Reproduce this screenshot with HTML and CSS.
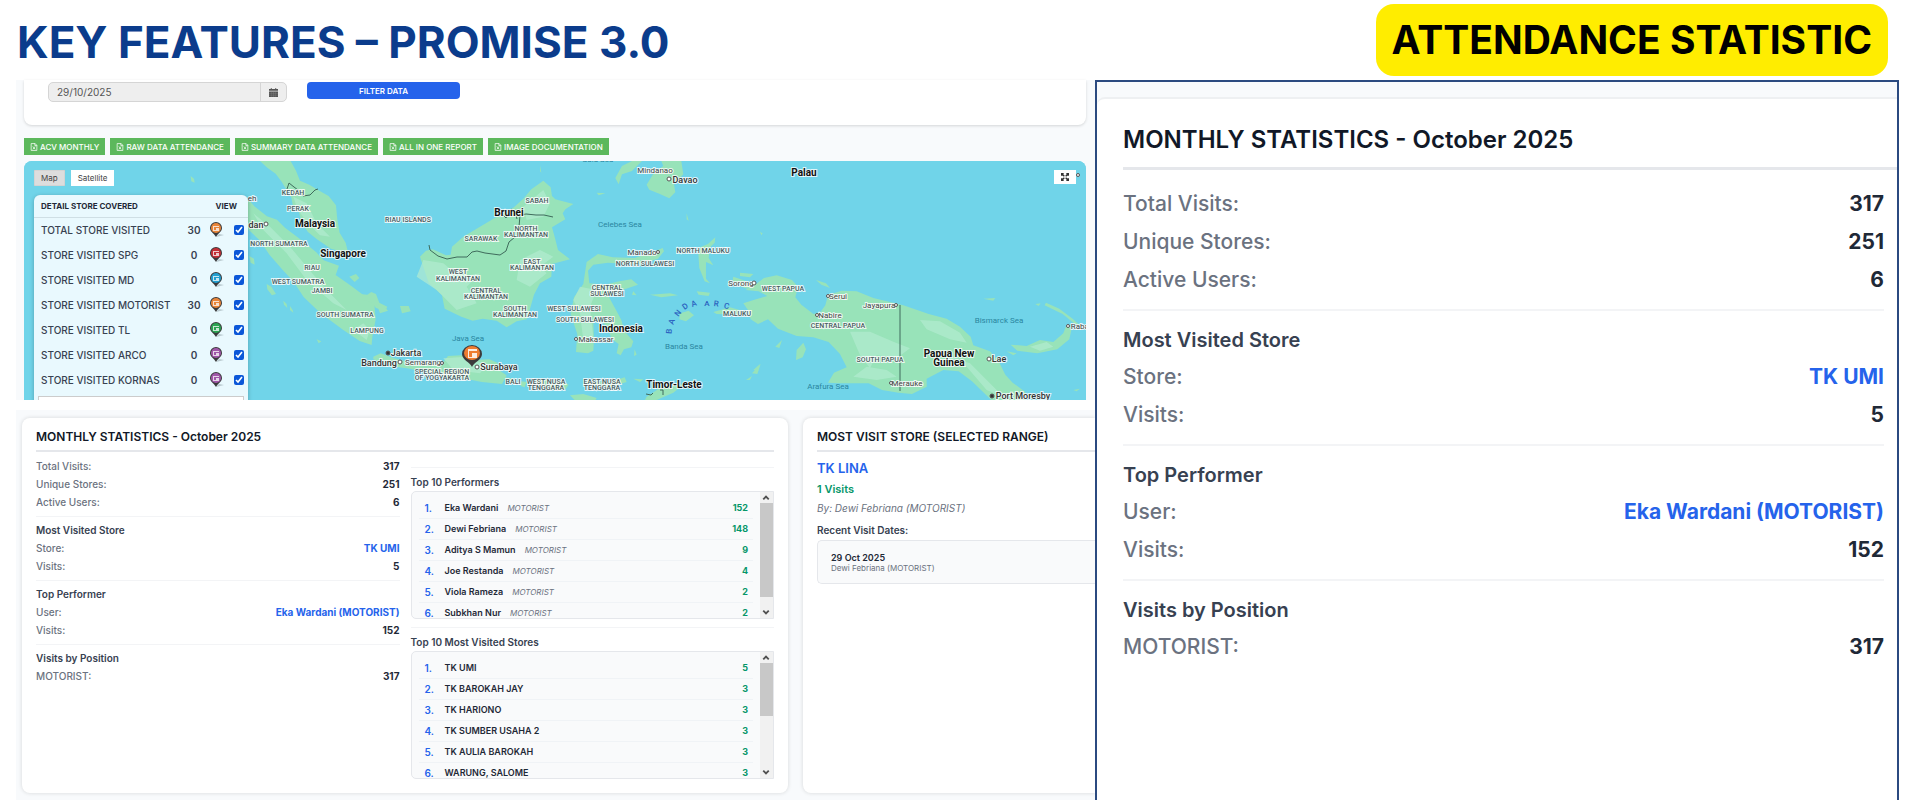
FILE: index.html
```html
<!DOCTYPE html>
<html lang="en">

<head>
	<meta charset="UTF-8">
	<meta name="viewport" content="width=device-width, initial-scale=1">
	<title>Key Features - Promise 3.0</title>
	<link rel="stylesheet" href="styles.css">
</head>

<body>
	<svg class="defs" aria-hidden="true">
		<symbol id="pin" viewBox="0 0 16 16">
			<path d="M8 15l8-2-5-1z" fill="#8a9aa0" opacity=".5" />
			<path d="M8 15C6 11 2 10 2 6a6 6 0 0 1 12 0c0 4-4 5-6 9z" fill="#3a3a3c" />
			<circle cx="8" cy="6" r="5" fill="currentColor" />
			<path d="M5 4h6v1H6v3h2V6h3v3H5z" fill="#fff" opacity=".75" />
		</symbol>
		<symbol id="excel" viewBox="0 0 12 14">
			<path d="M1 1h7l3 3v9H1zM7.500 1v3.500H11M4 6l4 5M8 6l-4 5" fill="none" stroke="currentColor" stroke-width="1.300" />
		</symbol>
		<symbol id="up" viewBox="0 0 12 12">
			<path d="M3 8l3-3 3 3" fill="none" stroke="#505050" stroke-width="2" />
		</symbol>
		<symbol id="down" viewBox="0 0 12 12">
			<path d="M3 4l3 3 3-3" fill="none" stroke="#505050" stroke-width="2" />
		</symbol>
	</svg>

	<header class="header">
		<h1>KEY FEATURES – PROMISE 3.0</h1>
		<div class="tag">ATTENDANCE STATISTIC</div>
	</header>

	<main class="board">
		<div class="dashboard">
			<section class="top">
				<form class="filter">
					<div class="date">
						<input type="text" value="29/10/2025" aria-label="Date">
						<button type="button" aria-label="Open calendar">
							<svg viewBox="0 0 10 10"><path d="M0 1h2V0h1v1h4V0h1v1h2v2H0zM0 4h10v6H0z" fill="#555" /><path d="M3 4v6M5 4v6M7 4v6M0 6h10M0 8h10" stroke="#999" stroke-width=".3" /></svg>
						</button>
					</div>
					<button type="button" class="apply">FILTER DATA</button>
				</form>

				<div class="exports">
					<button type="button"><svg><use href="#excel" /></svg>ACV MONTHLY</button>
					<button type="button"><svg><use href="#excel" /></svg>RAW DATA ATTENDANCE</button>
					<button type="button"><svg><use href="#excel" /></svg>SUMMARY DATA ATTENDANCE</button>
					<button type="button"><svg><use href="#excel" /></svg>ALL IN ONE REPORT</button>
					<button type="button"><svg><use href="#excel" /></svg>IMAGE DOCUMENTATION</button>
				</div>

				<div class="map">
					<svg class="world" viewBox="24 161 1062 239" preserveAspectRatio="xMinYMin slice">
						<rect x="24" y="161" width="1062" height="239" fill="#70d4e9" />
						<!-- Malay peninsula, Sumatra -->
						<g class="land" transform="translate(0 130) scale(.3333)">
							<path d="M780 93l22 20 25 18 18 24 15 25 14 22 4 22 18 18 8 34 20 30 27 22 42 28 52 14-8-32-18-30-7-40-4-42-22-28-28-16-30-18-28-12-12-30-16-29z" />
							<path d="M743 205l20 24 38 30 30 10 24 24 40 30 54 44 22 24 46 16-10 28 46 32 32 24 38 28 4 50-10 52 -2 24-36-12-50-34-68-50-50-48-30-46-32-34-40-46-30-44-38-36z" />
							<path d="M1078 492l24 2 12-8 14 6 10 26 24 12-6 12-28-8-12-16-26-8z" />
							<path d="M748 378l14 8 2 18-12-6zM800 462l14 8 14 22-12 4-14-18zM850 512l10 10 2 12-10-10zM870 528l8 12 2 8-10-8zM950 628l14 6-8 6zM1048 440l20-8 10 12-14 12zM572 138l10 8 2 12-10-4z" />
						</g>
						<g class="relief" transform="translate(0 130) scale(.3333)">
							<path d="M880 200l40 20 30 60 40 40-30-4-40-40-28-40zM760 250l50 40 60 60 50 60 60 70 60 60-40-20-80-70-60-80-70-70zM1060 600l30-20 20 20-10 30z" />
						</g>
						<!-- Borneo, Java, Sulawesi and the islands around -->
						<g class="land" transform="translate(380 150) scale(.3333)">
							<path d="M120 320l18-18 20-4 40 18 14-2 4-24 34-30 50-30 48-28 54-30 28-26 24-28 36-26 22 20 4 26 10 10 54 14-24 16-8 12 8 18-40 24 10 36 8 32 36 28-54 14-2 38-34 20-18 34-14 50-8 24-30 6-30 18-30-20-42-6-30 6-34-12-50-24-8-40-40-38z" />
							<path d="M-20 620l22-10 38 14 30 8 40 6 44 2 36-4 14-18 40-2 34 14 50-2 24 10 8 24 20 14-14 26-60-6-50-10-66-6-60-14-40-10-60-8-50-20z" />
							<path d="M372 682l30 4 6 14-20-2zM424 694l16 2-6 16-12-4zM456 690l40-2 50 6 20 10-10 14-60 0-30-8zM570 736l40-4 40 12-6 10-60-4zM610 690l40 6 60-6 24-8 6 14-50 16-70-6zM760 686l30 2-10 8zM800 740l40-26 50-12 20 2-30 24-50 22-36 2z" />
							<path d="M620 336l34-24 44 10 66 2 50-16 34-14 4 10-18 22-60 18-90-6-44 6-16 18 4 38 46 4 44-10 36-6 20 16-40 14-50 18 22 40 18 34 10 34 26 30-6 18-22 6-10 18-12-6 6-28-20-14-16-40-26-20-14 10 2 50-2 34-16 8-36-4 4-54-20-60 10-50 28-40z" />
							<path d="M984 282l22-20-2 16-14 14-4 32 14 22-22-10 0 50 12 14-16-6-16-40-4-60zM800 104l22-36 28-20-6-15h60l6 40-28 30 4 24-18 18-30-14-30-12zM706 84l20-36 30-15h30l-30 30-30 10-10 30zM650 128l26 2-20 6zM760 424l10 12-14-2zM810 434l60-4 24 6-50 6zM950 424l40 4-4 10-30-4zM900 490l26-8 16 14-24 18-20-6zM1000 486l50-14 50 14-20 8-70-2zM1060 380l40 14 40 14-10 14-36-8-36-20zM-10 462l20 4 14 16-24 8zM60 468l26 0 6 16-26 6zM920 190l6 22-6-4zM1120 660l20-18-6 22zM764 598l6 16-8 4zM480 46l4 22-4-4z" />
						</g>
						<g class="relief" transform="translate(380 150) scale(.3333)">
							<path d="M430 170l60-50 20 40-20 40-50 10zM130 330l60 10 50 40 60-10-40 40 30 50-60 20-60-60-60-40zM420 330l60-30 40 20-40 30 20 20-50 40-40-20zM600 410l50 10-20 50 10 90-30 10-10-80-20-40zM190 625l70-5 60 25-20 25-80-10z" />
						</g>
						<!-- New Guinea -->
						<g class="land" transform="translate(740 150) scale(.3333)">
							<path d="M46 404l26-20 38-8 46 14 18 20-8 32 18 22 36 28 20-4 16-22 8-30 40-14 46 2 50 20 90 22 76 26 54 14 40 24 32 30 8 26 50 18 26 30 20 40 22 24 38 28 0 26-100 0-60-58-40-30-46-4-50 26 0 24-44 22-40-4-50-8-40-20-90 0-32-2 18-30 38-16-20-40-34-36-46-14-50-4-56-22-30-28-30 14-22-14-8-28-14-20 38-12 34-10-26-14-40-4z" />
							<path d="M228 390l30 10 12 14-26-10zM0 368l40 4-10 10-30-4zM730 446l36-2-6 8zM812 584l48 4 40-18 40 6 30-26 10-26 16 8-8 36-36 30-60 12-60-8zM918 458l40 18 40 30 24 22-10 0-44-36-54-26zM170 600l20-22 8 20-10 24-20 8zM36 670l26-28-10 30zM106 590l20-20-8 24zM18 690l18-12-6 12zM1000 720l20-4-10 8zM886 462l16-2-6 8zM800 604l30 6-10 6zM60 246l8 4-4 6z" />
						</g>
						<g class="relief" transform="translate(740 150) scale(.3333)">
							<path d="M330 545l60 0 70 30 50 20-40 30-60-10-20 40-30-40zM340 680l40-30 60 10 30 20-60 10zM540 510l60 4 60 34 20 30-50-10-70-30zM590 640l40-20 60 20 60 60 40 40-50-20-60-70-60-10zM870 590l50-14 20 14-40 12z" />
						</g>
						<g class="border">
							<path d="M287 189l2-6 5 4 4 3 5 6 7-1 5-5 3-1M429 245l1 5 8 6 9 3 10-2 10 0 5-5 5-1 8 2 15 2 6-4 3-9 6-5M519 227l1-12 6-1 10 1 8 0 9 2M503 215l3 3 5-9 4 3 2 7M646 394l5 1 2-2M660 390l3 0 0 5M900 305v86" />
						</g>
						<g class="province">
							<text x="293" y="195">KEDAH</text>
							<text x="298" y="211">PERAK</text>
							<text x="279" y="246">NORTH SUMATRA</text>
							<text x="312" y="270">RIAU</text>
							<text x="298" y="284">WEST SUMATRA</text>
							<text x="322" y="293">JAMBI</text>
							<text x="345" y="317">SOUTH SUMATRA</text>
							<text x="367" y="333">LAMPUNG</text>
							<text x="408" y="222">RIAU ISLANDS</text>
							<text x="537" y="203">SABAH</text>
							<text x="481" y="241">SARAWAK</text>
							<text x="526" y="231">NORTH</text>
							<text x="526" y="237">KALIMANTAN</text>
							<text x="532" y="264">EAST</text>
							<text x="532" y="270">KALIMANTAN</text>
							<text x="458" y="274">WEST</text>
							<text x="458" y="281">KALIMANTAN</text>
							<text x="486" y="293">CENTRAL</text>
							<text x="486" y="299">KALIMANTAN</text>
							<text x="515" y="311">SOUTH</text>
							<text x="515" y="317">KALIMANTAN</text>
							<text x="574" y="311">WEST SULAWESI</text>
							<text x="585" y="322">SOUTH SULAWESI</text>
							<text x="607" y="290">CENTRAL</text>
							<text x="607" y="296">SULAWESI</text>
							<text x="645" y="266">NORTH SULAWESI</text>
							<text x="703" y="253">NORTH MALUKU</text>
							<text x="737" y="316">MALUKU</text>
							<text x="442" y="374">SPECIAL REGION</text>
							<text x="442" y="380">OF YOGYAKARTA</text>
							<text x="513" y="384">BALI</text>
							<text x="546" y="384">WEST NUSA</text>
							<text x="546" y="390">TENGGARA</text>
							<text x="602" y="384">EAST NUSA</text>
							<text x="602" y="390">TENGGARA</text>
							<text x="783" y="291">WEST PAPUA</text>
							<text x="838" y="328">CENTRAL PAPUA</text>
							<text x="880" y="362">SOUTH PAPUA</text>
						</g>
						<g class="sea">
							<text x="620" y="227">Celebes Sea</text>
							<text x="468" y="341">Java Sea</text>
							<text x="684" y="349">Banda Sea</text>
							<text x="828" y="389">Arafura Sea</text>
							<text x="999" y="323">Bismarck Sea</text>
							<text x="598" y="162">Sulu Sea</text>
						</g>
						<text class="arc" x="674 676 681 687 695 707 716 726" y="334 325 317 310 307 306 306 308" rotate="-85 -70 -52 -35 -20 0 6 14">BANDAARC</text>
						<g class="town">
							<text x="655" y="173">Mindanao</text>
							<text x="423" y="365">Semarang</text>
							<text x="741" y="286">Sorong</text>
							<text x="838" y="299">Serui</text>
							<text x="879" y="308">Jayapura</text>
							<text x="830" y="318">Nabire</text>
							<text x="907" y="386">Merauke</text>
							<text x="1083" y="329">Rabaul</text>
							<text x="642" y="255">Manado</text>
							<text x="596" y="342">Makassar</text>
							<text x="252" y="201">eh</text>
						</g>
						<g class="city">
							<text x="685" y="183">Davao</text>
							<text x="256" y="228">dan</text>
							<text x="406" y="356">Jakarta</text>
							<text x="379" y="366">Bandung</text>
							<text x="499" y="370">Surabaya</text>
							<text x="999" y="362">Lae</text>
							<text x="1023" y="399">Port Moresby</text>
						</g>
						<g class="country">
							<text x="315" y="227">Malaysia</text>
							<text x="343" y="257">Singapore</text>
							<text x="509" y="216">Brunei</text>
							<text x="804" y="176">Palau</text>
							<text x="621" y="332">Indonesia</text>
							<text x="674" y="388">Timor-Leste</text>
							<text x="949" y="357">Papua New</text>
							<text x="949" y="366">Guinea</text>
						</g>
						<g class="dots">
							<circle cx="669" cy="179" r="2" />
							<circle cx="266" cy="224" r="2" />
							<circle cx="400" cy="362" r="2" />
							<circle cx="442" cy="363" r="1.500" />
							<circle cx="477" cy="367" r="2" />
							<circle cx="658" cy="252" r="1.500" />
							<circle cx="576" cy="339" r="1.500" />
							<circle cx="754" cy="283" r="2" />
							<circle cx="828" cy="296" r="1.500" />
							<circle cx="896" cy="305" r="1.500" />
							<circle cx="817" cy="315" r="1.500" />
							<circle cx="891" cy="383" r="1.500" />
							<circle cx="1068" cy="326" r="1.500" />
							<circle cx="989" cy="359" r="2" />
							<circle cx="1078" cy="175" r="1.500" />
							<circle cx="388" cy="353" r="2" class="capital" />
							<circle cx="992" cy="396" r="2" class="capital" />
						</g>
						<path d="M472 367c-2-5-10-7-10-13a10 9 0 0 1 20 0c0 6-8 8-10 13z" fill="#3c3a3c" />
						<ellipse cx="472" cy="353" rx="8" ry="7" fill="#ee7d31" />
						<path d="M468 349h9v2h-8v6h3v-4h5v5h-9z" fill="#fff" opacity=".85" />
					</svg>

					<div class="types">
						<button type="button" class="active">Map</button>
						<button type="button">Satellite</button>
					</div>
					<button type="button" class="full" aria-label="Toggle fullscreen">
						<svg viewBox="0 0 12 12"><path d="M1 4V1h3M8 1h3v3M11 8v3H8M4 11H1V8M1 1l4 4M11 1L7 5M11 11L7 7M1 11l4-4" fill="none" stroke="#333" stroke-width="2" /></svg>
					</button>

					<div class="stores">
						<table>
							<thead>
								<tr><th colspan="2">DETAIL STORE COVERED</th><th colspan="2" class="view">VIEW</th></tr>
							</thead>
							<tbody>
								<tr><td><label for="all">TOTAL STORE VISITED</label></td><td class="count">30</td><td><svg class="orange"><use href="#pin" /></svg></td><td><input type="checkbox" id="all" checked></td></tr>
								<tr><td><label for="spg">STORE VISITED SPG</label></td><td class="count">0</td><td><svg class="red"><use href="#pin" /></svg></td><td><input type="checkbox" id="spg" checked></td></tr>
								<tr><td><label for="md">STORE VISITED MD</label></td><td class="count">0</td><td><svg class="blue"><use href="#pin" /></svg></td><td><input type="checkbox" id="md" checked></td></tr>
								<tr><td><label for="motorist">STORE VISITED MOTORIST</label></td><td class="count">30</td><td><svg class="orange"><use href="#pin" /></svg></td><td><input type="checkbox" id="motorist" checked></td></tr>
								<tr><td><label for="tl">STORE VISITED TL</label></td><td class="count">0</td><td><svg class="green"><use href="#pin" /></svg></td><td><input type="checkbox" id="tl" checked></td></tr>
								<tr><td><label for="arco">STORE VISITED ARCO</label></td><td class="count">0</td><td><svg class="purple"><use href="#pin" /></svg></td><td><input type="checkbox" id="arco" checked></td></tr>
								<tr><td><label for="kornas">STORE VISITED KORNAS</label></td><td class="count">0</td><td><svg class="purple"><use href="#pin" /></svg></td><td><input type="checkbox" id="kornas" checked></td></tr>
							</tbody>
						</table>
						<input type="text" class="search" aria-label="Search store">
					</div>
				</div>
			</section>

			<section class="bottom">
				<div class="card monthly">
					<h2>MONTHLY STATISTICS - October 2025</h2>
					<div class="columns">
						<div class="stats">
							<div class="row"><span>Total Visits:</span><b>317</b></div>
							<div class="row"><span>Unique Stores:</span><b>251</b></div>
							<div class="row"><span>Active Users:</span><b>6</b></div>
							<div class="group">
								<h3>Most Visited Store</h3>
								<div class="row"><span>Store:</span><b class="link">TK UMI</b></div>
								<div class="row"><span>Visits:</span><b>5</b></div>
							</div>
							<div class="group">
								<h3>Top Performer</h3>
								<div class="row"><span>User:</span><b class="link">Eka Wardani (MOTORIST)</b></div>
								<div class="row"><span>Visits:</span><b>152</b></div>
							</div>
							<div class="group">
								<h3>Visits by Position</h3>
								<div class="row"><span>MOTORIST:</span><b>317</b></div>
							</div>
						</div>

						<div class="tops">
							<div class="top-list">
								<h3>Top 10 Performers</h3>
								<div class="scroller">
									<ol>
										<li><i>1.</i><b>Eka Wardani</b><em>MOTORIST</em><strong>152</strong></li>
										<li><i>2.</i><b>Dewi Febriana</b><em>MOTORIST</em><strong>148</strong></li>
										<li><i>3.</i><b>Aditya S Mamun</b><em>MOTORIST</em><strong>9</strong></li>
										<li><i>4.</i><b>Joe Restanda</b><em>MOTORIST</em><strong>4</strong></li>
										<li><i>5.</i><b>Viola Rameza</b><em>MOTORIST</em><strong>2</strong></li>
										<li><i>6.</i><b>Subkhan Nur</b><em>MOTORIST</em><strong>2</strong></li>
									</ol>
									<div class="bar">
										<svg><use href="#up" /></svg>
										<div class="track"><div class="thumb long"></div></div>
										<svg><use href="#down" /></svg>
									</div>
								</div>
							</div>
							<div class="top-list">
								<h3>Top 10 Most Visited Stores</h3>
								<div class="scroller">
									<ol>
										<li><i>1.</i><b>TK UMI</b><strong>5</strong></li>
										<li><i>2.</i><b>TK BAROKAH JAY</b><strong>3</strong></li>
										<li><i>3.</i><b>TK HARIONO</b><strong>3</strong></li>
										<li><i>4.</i><b>TK SUMBER USAHA 2</b><strong>3</strong></li>
										<li><i>5.</i><b>TK AULIA BAROKAH</b><strong>3</strong></li>
										<li><i>6.</i><b>WARUNG, SALOME</b><strong>3</strong></li>
									</ol>
									<div class="bar">
										<svg><use href="#up" /></svg>
										<div class="track"><div class="thumb short"></div></div>
										<svg><use href="#down" /></svg>
									</div>
								</div>
							</div>
						</div>
					</div>
				</div>

				<div class="card most">
					<h2>MOST VISIT STORE (SELECTED RANGE)</h2>
					<p class="store">TK LINA</p>
					<p class="visits">1 Visits</p>
					<p class="by">By: Dewi Febriana (MOTORIST)</p>
					<h3>Recent Visit Dates:</h3>
					<div class="recent">
						<b>29 Oct 2025</b>
						<span>Dewi Febriana (MOTORIST)</span>
					</div>
				</div>
			</section>
		</div>

		<aside class="detail">
			<div class="sheet stats">
				<h2>MONTHLY STATISTICS - October 2025</h2>
				<div class="sheet-body">
					<div class="row"><span>Total Visits:</span><b>317</b></div>
					<div class="row"><span>Unique Stores:</span><b>251</b></div>
					<div class="row"><span>Active Users:</span><b>6</b></div>
					<div class="group">
						<h3>Most Visited Store</h3>
						<div class="row"><span>Store:</span><b class="link">TK UMI</b></div>
						<div class="row"><span>Visits:</span><b>5</b></div>
					</div>
					<div class="group">
						<h3>Top Performer</h3>
						<div class="row"><span>User:</span><b class="link">Eka Wardani (MOTORIST)</b></div>
						<div class="row"><span>Visits:</span><b>152</b></div>
					</div>
					<div class="group">
						<h3>Visits by Position</h3>
						<div class="row"><span>MOTORIST:</span><b>317</b></div>
					</div>
				</div>
			</div>
		</aside>
	</main>
</body>

</html>
```
FILE: styles.css
```css
* {
	box-sizing: border-box;
}

body {
	display: flex;
	flex-direction: column;
	min-height: 100vh;
	margin: 0;
	background-color: #fff;
	color: #1f2937;
	font-family: Inter, "Liberation Sans", sans-serif;
	font-size: 11px;
}

h1,
h2,
h3,
p,
ol {
	margin: 0;
	padding: 0;
}

button,
input {
	font-family: inherit;
}

.defs {
	display: none;
}

.header {
	display: flex;
	justify-content: space-between;
	align-items: flex-start;
	height: 80px;
	padding: 4px 32px 0 17px;
}

.header h1 {
	color: #0b3c8c;
	font-size: 44px;
	line-height: 76px;
	font-weight: 700;
}

.tag {
	padding: 0 16px;
	border-radius: 18px;
	background-color: #ffed00;
	color: #000;
	font-size: 39px;
	line-height: 72px;
	font-weight: 700;
}

.board {
	flex: 1;
	display: grid;
	grid-template-columns: 1079fr 804fr;
	padding: 0 21px 0 16px;
}

.dashboard {
	display: flex;
	flex-direction: column;
	min-width: 0;
}

/* filter and map */
.top {
	padding: 0 9px 0 8px;
	background-color: #f8fafc;
}

.filter {
	display: flex;
	align-items: flex-start;
	gap: 20px;
	height: 45px;
	padding: 2px 24px 0;
	border-radius: 0 0 8px 8px;
	background-color: #fff;
	box-shadow: 0 1px 3px rgba(0, 0, 0, 0.15);
}

.date {
	display: flex;
	width: 239px;
	height: 20px;
	border: 1px solid #d5d5d5;
	border-radius: 5px;
	background-color: #eee;
	overflow: hidden;
}

.date input {
	flex: 1;
	min-width: 0;
	padding: 0 8px;
	border: none;
	background: none;
	color: #555;
	font-size: 10px;
}

.date button {
	display: flex;
	align-items: center;
	justify-content: center;
	width: 26px;
	padding: 0;
	border: none;
	border-left: 1px solid #d5d5d5;
	background: none;
}

.date svg {
	width: 9px;
	height: 9px;
}

.apply {
	width: 153px;
	height: 17px;
	padding: 0;
	border: none;
	border-radius: 4px;
	background-color: #2563eb;
	color: #fff;
	font-size: 8px;
	font-weight: 600;
}

.exports {
	display: flex;
	gap: 5px;
	padding: 13px 0 6px;
}

.exports button {
	display: flex;
	align-items: center;
	gap: 2px;
	height: 17px;
	padding: 0 6px;
	border: none;
	background-color: #5cb85c;
	color: #fff;
	font-size: 8px;
	font-weight: 500;
}

.exports svg {
	width: 8px;
	height: 8px;
}

.map {
	position: relative;
	height: 239px;
	border-radius: 8px 8px 0 0;
	background-color: #70d4e9;
	overflow: hidden;
}

.world {
	display: block;
	width: 100%;
	height: 100%;
	font-family: Roboto, sans-serif;
	text-anchor: middle;
}

.world text {
	paint-order: stroke;
	stroke: rgba(255, 255, 255, 0.8);
	stroke-width: 2px;
}

.land {
	fill: #98e3b9;
}

.relief {
	fill: #b2ebd0;
	opacity: 0.7;
}

.border {
	fill: none;
	stroke: #3f6b5c;
	stroke-width: 1px;
}

.province {
	fill: #4a5c60;
	font-size: 7px;
	font-weight: 500;
}

.town {
	fill: #444;
	font-size: 8px;
}

.city {
	fill: #333;
	font-size: 9px;
	font-weight: 500;
}

.country {
	fill: #111;
	font-size: 10px;
	font-weight: 700;
}

.world .sea text,
.world .arc {
	stroke: none;
}

.sea {
	fill: #2a86a0;
	font-size: 8px;
}

.arc {
	fill: #2a62c0;
	font-size: 8px;
	font-weight: 500;
}

.dots {
	fill: #fff;
	stroke: #555;
	stroke-width: 1px;
}

.dots .capital {
	fill: #333;
}

.types {
	position: absolute;
	top: 9px;
	left: 10px;
	display: flex;
	gap: 6px;
}

.types button {
	height: 16px;
	padding: 0 7px;
	border: none;
	background-color: #fff;
	color: #444;
	font-size: 8px;
}

.types .active {
	background-color: #ddd;
	box-shadow: inset 0 0 1px #888;
}

.full {
	position: absolute;
	top: 9px;
	right: 10px;
	display: flex;
	align-items: center;
	justify-content: center;
	width: 22px;
	height: 14px;
	padding: 0;
	border: none;
	background-color: #fff;
}

.full svg {
	width: 8px;
	height: 8px;
}

.stores {
	position: absolute;
	top: 34px;
	left: 10px;
	width: 214px;
	border-radius: 6px 6px 0 0;
	background-color: #e9f9fe;
	box-shadow: 0 1px 4px rgba(0, 0, 0, 0.25);
}

.stores table {
	width: 100%;
	border-collapse: collapse;
}

.stores th {
	height: 22px;
	padding: 0 0 0 7px;
	border-bottom: 1px solid #cfdfe5;
	font-size: 8px;
	font-weight: 700;
	text-align: left;
}

.stores .view {
	padding: 0 11px 0 0;
	text-align: right;
}

.stores td {
	height: 25px;
	padding: 0;
	color: #374151;
	font-size: 10px;
	font-weight: 500;
}

.stores td:first-child {
	width: 150px;
	padding-left: 7px;
}

.stores .count {
	width: 20px;
	font-weight: 600;
	text-align: center;
}

.stores td svg {
	display: block;
	width: 16px;
	height: 16px;
	margin-left: 4px;
}

.orange {
	color: #e8853a;
}

.red {
	color: #c22f36;
}

.blue {
	color: #229fd0;
}

.green {
	color: #2ba352;
}

.purple {
	color: #a057a8;
}

.stores input[type="checkbox"] {
	display: block;
	width: 10px;
	height: 10px;
	margin: 0 4px 0 auto;
	accent-color: #0b57d8;
}

.search {
	display: block;
	width: 206px;
	height: 20px;
	margin: 4px;
	border: 1px solid #ccc;
	background-color: #fff;
}

/* statistics */
.bottom {
	flex: 1;
	display: grid;
	grid-template-columns: 766fr 292fr;
	gap: 15px;
	align-items: start;
	margin-top: 10px;
	padding: 8px 0 7px 6px;
	background-color: #f8fafc;
}

.card {
	min-height: 375px;
	padding: 10px 14px 11px;
	border-radius: 8px;
	background-color: #fff;
	box-shadow: 0 0 4px rgba(0, 0, 0, 0.14);
}

.card h2 {
	margin-bottom: 5px;
	padding-bottom: 4px;
	border-bottom: 2px solid #e5e7eb;
	color: #111827;
	font-size: 12px;
	line-height: 18px;
	font-weight: 600;
}

.card h3 {
	color: #374151;
	font-size: 10px;
	line-height: 18px;
	font-weight: 600;
}

.columns {
	display: grid;
	grid-template-columns: 1fr 1fr;
	gap: 11px;
}

.row {
	display: flex;
	justify-content: space-between;
	font-size: 10px;
	line-height: 18px;
}

.row span {
	color: #6b7280;
	font-weight: 500;
}

.row b {
	font-weight: 700;
}

.row .link {
	color: #2563eb;
}

.group {
	margin-top: 5px;
	padding-top: 4px;
	border-top: 1px solid #f3f4f6;
}

.top-list {
	margin-top: 8px;
	padding-top: 5px;
	border-top: 1px solid #f3f4f6;
}

.top-list:first-child {
	margin-top: 10px;
}

.scroller {
	display: flex;
	height: 128px;
	border: 1px solid #e5e7eb;
	border-radius: 5px 0 0 5px;
	background-color: #f9fafb;
	overflow: hidden;
}

.scroller ol {
	flex: 1;
	padding: 6px 7px 0;
	list-style: none;
}

.scroller li {
	display: flex;
	align-items: center;
	height: 21px;
	padding: 0 5px 0 6px;
	border-bottom: 1px solid #f0f3f6;
	font-size: 9px;
	line-height: 12px;
}

.scroller i {
	width: 20px;
	color: #2563eb;
	font-size: 10px;
	font-style: normal;
	font-weight: 600;
}

.scroller b {
	font-weight: 600;
}

.scroller em {
	margin-left: 9px;
	color: #6b7280;
	font-size: 8px;
}

.scroller strong {
	margin-left: auto;
	color: #059669;
	font-weight: 700;
}

.bar {
	display: flex;
	flex-direction: column;
	width: 13px;
	background-color: #f1f1f1;
}

.bar svg {
	width: 12px;
	height: 11px;
}

.track {
	flex: 1;
}

.thumb {
	background-color: #c8c8c8;
}

.long {
	height: 90%;
}

.short {
	height: 51%;
}

.most {
	padding-right: 0;
	border-radius: 8px 0 0 8px;
}

.most .store {
	color: #2563eb;
	font-size: 13px;
	line-height: 22px;
	font-weight: 600;
}

.most .visits {
	color: #059669;
	font-size: 11px;
	line-height: 20px;
	font-weight: 600;
}

.most .by {
	color: #6b7280;
	font-size: 10px;
	line-height: 18px;
	font-style: italic;
}

.most h3 {
	margin: 4px 0 1px;
}

.recent {
	display: flex;
	flex-direction: column;
	padding: 12px 13px 10px;
	border: 1px solid #e5e7eb;
	border-right: none;
	border-radius: 5px 0 0 5px;
	background-color: #f9fafb;
	font-size: 8px;
	line-height: 10px;
}

.recent b {
	font-size: 9px;
	font-weight: 600;
}

.recent span {
	color: #6b7280;
}

/* enlarged statistics */
.detail {
	padding-top: 15px;
	border: 2px solid #2b4a80;
	border-bottom: none;
	background-color: #f8fafc;
}

.sheet {
	height: 100%;
	padding: 21px 0 0 26px;
	border-top: 2px solid #eef0f2;
	border-radius: 8px 0 0 0;
	background-color: #fff;
}

.sheet h2 {
	padding-bottom: 7px;
	border-bottom: 3px solid #e5e7eb;
	color: #111827;
	font-size: 24px;
	line-height: 40px;
	font-weight: 600;
}

.sheet-body {
	padding: 15px 13px 0 0;
}

.sheet .row {
	font-size: 21px;
	line-height: 38px;
}

.sheet h3 {
	color: #374151;
	font-size: 20px;
	line-height: 36px;
	font-weight: 600;
}

.sheet .group {
	margin-top: 10px;
	padding-top: 11px;
	border-top: 2px solid #f3f4f6;
}
```
